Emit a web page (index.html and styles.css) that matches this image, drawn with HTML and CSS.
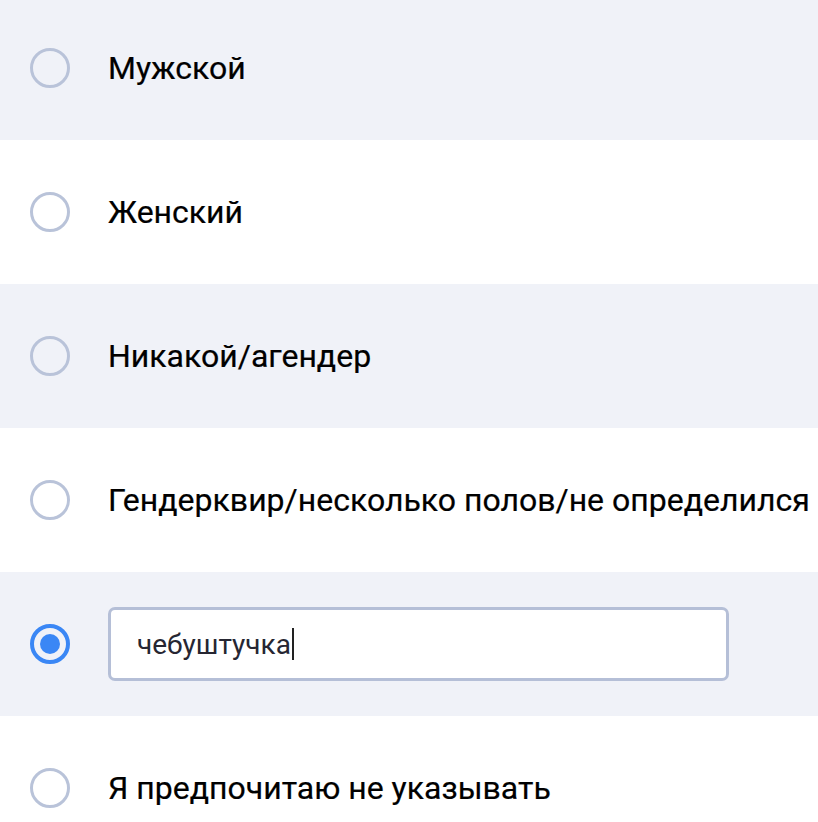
FILE: index.html
```html
<!DOCTYPE html>
<html lang="ru">
<head>
<meta charset="utf-8">
<title>Пол</title>
<link rel="stylesheet" href="styles.css">
</head>
<body>
<div class="list">
  <div class="row row-alt">
    <span class="radio"></span>
    <span class="label">Мужской</span>
  </div>
  <div class="row">
    <span class="radio"></span>
    <span class="label">Женский</span>
  </div>
  <div class="row row-alt">
    <span class="radio"></span>
    <span class="label">Никакой/агендер</span>
  </div>
  <div class="row">
    <span class="radio"></span>
    <span class="label">Гендерквир/несколько полов/не определился</span>
  </div>
  <div class="row row-alt">
    <span class="radio radio-checked"></span>
    <div class="field"><span class="field-text">чебуштучка</span><span class="caret"></span></div>
  </div>
  <div class="row">
    <span class="radio"></span>
    <span class="label">Я предпочитаю не указывать</span>
  </div>
</div>
</body>
</html>
```
FILE: styles.css
```css
html, body {
  margin: 0;
  padding: 0;
  background: #ffffff;
  overflow: hidden;
}

.list {
  margin-top: -4px;
  display: flex;
  flex-direction: column;
}

.row {
  height: 144px;
  display: flex;
  align-items: center;
  gap: 38px;
  padding-left: 30px;
  background: #ffffff;
  white-space: nowrap;
}

.row-alt {
  background: #f0f2f8;
}

.radio {
  flex: none;
  box-sizing: border-box;
  width: 40px;
  height: 40px;
  border: 3px solid #b9c3d9;
  border-radius: 50%;
  background: transparent;
  display: flex;
  align-items: center;
  justify-content: center;
}

.radio-checked {
  border: 4px solid #3a87f5;
}

.radio-checked::after {
  content: "";
  width: 20px;
  height: 20px;
  border-radius: 50%;
  background: #3a87f5;
}

.label {
  font-family: Roboto, "Liberation Sans", sans-serif;
  font-size: 32px;
  color: #000000;
  line-height: 1;
  -webkit-text-stroke: 0.2px #000000;
}

.field {
  flex: none;
  box-sizing: border-box;
  width: 621px;
  height: 74px;
  border: 3px solid #b5bfd7;
  border-radius: 7px;
  background: #ffffff;
  display: flex;
  align-items: center;
  padding-left: 26px;
}

.field-text {
  font-family: Roboto, "Liberation Sans", sans-serif;
  font-size: 28px;
  color: #262632;
}

.caret {
  width: 2px;
  height: 32px;
  background: #222222;
  margin-left: 1px;
}
```
